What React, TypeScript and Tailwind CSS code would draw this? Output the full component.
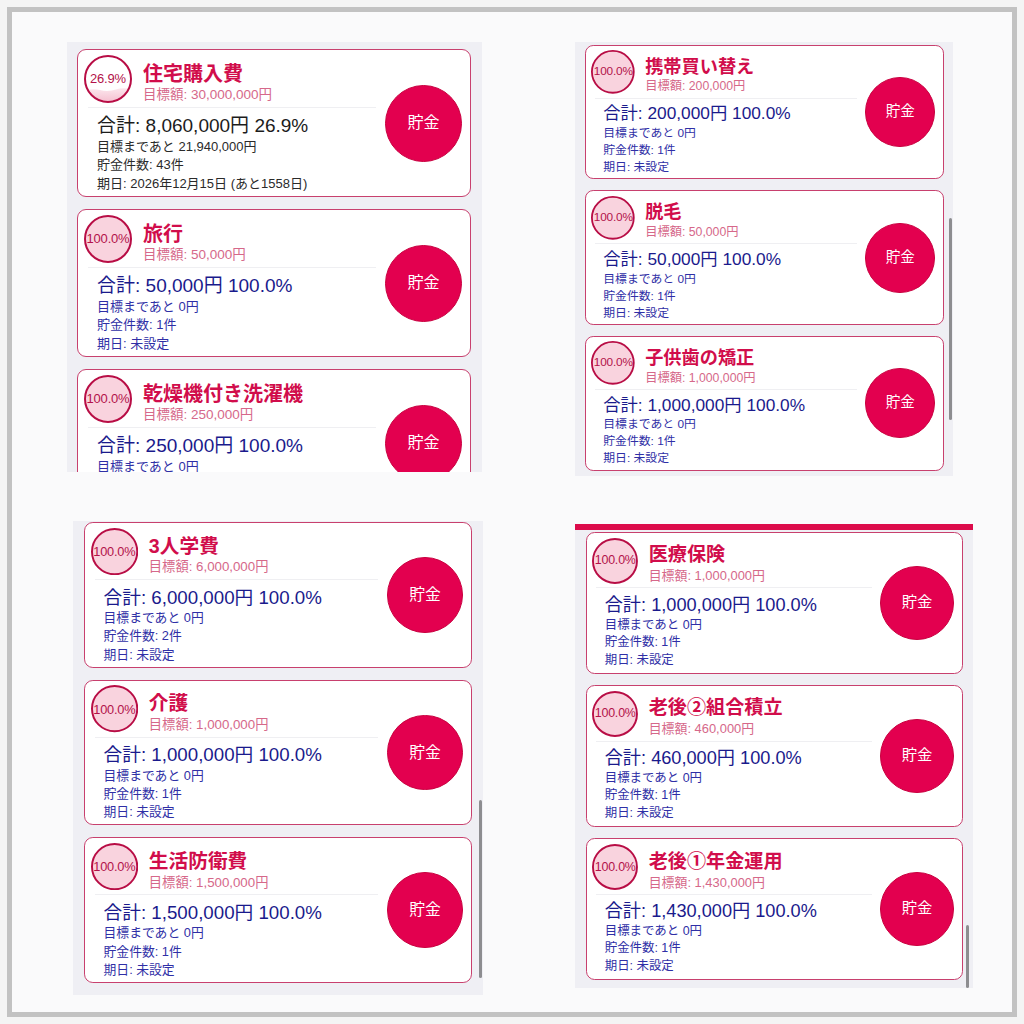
type Goal = {
  title: string;
  target: string;
  total: string;
  pct: string;
  remain: string;
  count: string;
  due: string;
  partial?: boolean;
};

const panel1: Goal[] = [
  { title: "住宅購入費", target: "30,000,000", total: "8,060,000", pct: "26.9", remain: "21,940,000", count: "43", due: "2026年12月15日 (あと1558日)", partial: true },
  { title: "旅行", target: "50,000", total: "50,000", pct: "100.0", remain: "0", count: "1", due: "未設定" },
  { title: "乾燥機付き洗濯機", target: "250,000", total: "250,000", pct: "100.0", remain: "0", count: "1", due: "未設定" },
];

const panel2: Goal[] = [
  { title: "携帯買い替え", target: "200,000", total: "200,000", pct: "100.0", remain: "0", count: "1", due: "未設定" },
  { title: "脱毛", target: "50,000", total: "50,000", pct: "100.0", remain: "0", count: "1", due: "未設定" },
  { title: "子供歯の矯正", target: "1,000,000", total: "1,000,000", pct: "100.0", remain: "0", count: "1", due: "未設定" },
];

const panel3: Goal[] = [
  { title: "3人学費", target: "6,000,000", total: "6,000,000", pct: "100.0", remain: "0", count: "2", due: "未設定" },
  { title: "介護", target: "1,000,000", total: "1,000,000", pct: "100.0", remain: "0", count: "1", due: "未設定" },
  { title: "生活防衛費", target: "1,500,000", total: "1,500,000", pct: "100.0", remain: "0", count: "1", due: "未設定" },
];

const panel4: Goal[] = [
  { title: "医療保険", target: "1,000,000", total: "1,000,000", pct: "100.0", remain: "0", count: "1", due: "未設定" },
  { title: "老後②組合積立", target: "460,000", total: "460,000", pct: "100.0", remain: "0", count: "1", due: "未設定" },
  { title: "老後①年金運用", target: "1,430,000", total: "1,430,000", pct: "100.0", remain: "0", count: "1", due: "未設定" },
];

function Gauge({ pct, partial }: { pct: string; partial?: boolean }) {
  return (
    <div className="relative h-[48px] w-[48px] shrink-0">
      <svg viewBox="0 0 48 48" className="absolute inset-0 h-full w-full">
        <defs>
          <clipPath id="gauge-clip">
            <circle cx="24" cy="24" r="22" />
          </clipPath>
          <linearGradient id="gauge-wave" x1="0" y1="0" x2="0" y2="1">
            <stop offset="0" stopColor="#fbe6ed" />
            <stop offset="1" stopColor="#f5bccd" />
          </linearGradient>
        </defs>
        {partial ? (
          <>
            <circle cx="24" cy="24" r="23" fill="#ffffff" />
            <g clipPath="url(#gauge-clip)">
              <path d="M0 36 Q8 33 16 35 T32 34.5 T48 35 V48 H0 Z" fill="url(#gauge-wave)" />
            </g>
            <circle cx="24" cy="24" r="23" fill="none" stroke="#b80d45" strokeWidth="2" />
          </>
        ) : (
          <circle cx="24" cy="24" r="23" fill="#f9d3de" stroke="#b80d45" strokeWidth="2" />
        )}
      </svg>
      <span className="absolute inset-0 flex items-center justify-center whitespace-nowrap text-[13px] tracking-[-0.2px] text-[#b3124a]">
        {pct}%
      </span>
    </div>
  );
}

function Card({ g }: { g: Goal }) {
  const main = g.partial ? "text-[#1c1c1c]" : "text-[#1a1a8c]";
  const sub = g.partial ? "text-[#2a2a2a]" : "text-[#2f2fa6]";
  return (
    <div className="flex h-[148px] w-[394px] shrink-0 rounded-[9px] border border-[#c8406e] bg-white">
      <div className="min-w-0 flex-1">
        <div className="flex pl-[6px] pt-[5px]">
          <Gauge pct={g.pct} partial={g.partial} />
          <div className="ml-[11px] mt-[7px]">
            <div className="whitespace-nowrap text-[20px] font-bold leading-[24px] text-[#d10d4b]">{g.title}</div>
            <div className="whitespace-nowrap text-[13.5px] leading-[18px] text-[#d6688a]">目標額: {g.target}円</div>
          </div>
        </div>
        <div className="ml-[10px] mt-[3px] h-px w-[288px] bg-[#efeff2]" />
        <div className="pl-[19px] pt-[5.5px]">
          <div className={`whitespace-nowrap text-[19px] leading-[24px] ${main}`}>
            合計: {g.total}円 {g.pct}%
          </div>
          <div className={`whitespace-nowrap text-[13px] leading-[18.5px] ${sub}`}>目標まであと {g.remain}円</div>
          <div className={`whitespace-nowrap text-[13px] leading-[18.5px] ${sub}`}>貯金件数: {g.count}件</div>
          <div className={`whitespace-nowrap text-[13px] leading-[18.5px] ${sub}`}>期日: {g.due}</div>
        </div>
      </div>
      <div className="mr-[8px] flex h-[77px] w-[77px] shrink-0 items-center justify-center self-center rounded-full border border-[#c9003f] bg-[#e3004f] text-[16px] text-white">
        貯金
      </div>
    </div>
  );
}

function Scrollbar({ className }: { className: string }) {
  return <div className={`absolute w-[3px] rounded-full bg-[#8d8d90] ${className}`} />;
}

export default function App() {
  return (
    <div className="h-[1024px] w-[1024px] bg-[#f4f4f4] p-[7px] font-['Liberation_Sans','Noto_Sans_CJK_JP',sans-serif]">
      <div className="h-full w-full border-[5px] border-[#c2c2c2] bg-[#fafafb]">
        {/* top row */}
        <div className="flex items-start pl-[55px] pt-[30px]">
          <div className="relative h-[430px] w-[415px] overflow-hidden bg-[#efeff4]">
            <div className="flex flex-col gap-[12px] pl-[10px] pt-[7px]">
              {panel1.map((g) => (
                <Card key={g.title} g={g} />
              ))}
            </div>
          </div>
          <div className="relative ml-[93px] h-[434px] w-[378px] overflow-hidden bg-[#efeff4]">
            <div className="flex flex-col gap-[12px] pl-[11px] pt-[3px] [zoom:0.91]">
              {panel2.map((g) => (
                <Card key={g.title} g={g} />
              ))}
            </div>
            <Scrollbar className="right-[1px] top-[176px] h-[202px]" />
          </div>
        </div>

        {/* bottom row */}
        <div className="mt-[45px] flex items-start pl-[61px]">
          <div className="relative h-[474px] w-[410px] overflow-hidden bg-[#efeff4]">
            <div className="flex flex-col gap-[12px] pl-[11px] pt-[1px] [zoom:0.985]">
              {panel3.map((g) => (
                <Card key={g.title} g={g} />
              ))}
            </div>
            <Scrollbar className="right-[1px] top-[279px] h-[178px]" />
          </div>
          <div className="relative ml-[92px] mt-[3px] flex h-[464px] w-[398px] flex-col overflow-hidden">
            <div className="h-[6px] shrink-0 bg-[#dc0b4b]" />
            <div className="flex-1 overflow-hidden bg-[#efeff4] pr-[3px]">
              <div className="flex flex-col gap-[12px] pl-[11px] pt-[2px] [zoom:0.957]">
                {panel4.map((g) => (
                  <Card key={g.title} g={g} />
                ))}
              </div>
            </div>
            <Scrollbar className="right-[4px] top-[401px] h-[63px]" />
          </div>
        </div>
      </div>
    </div>
  );
}
